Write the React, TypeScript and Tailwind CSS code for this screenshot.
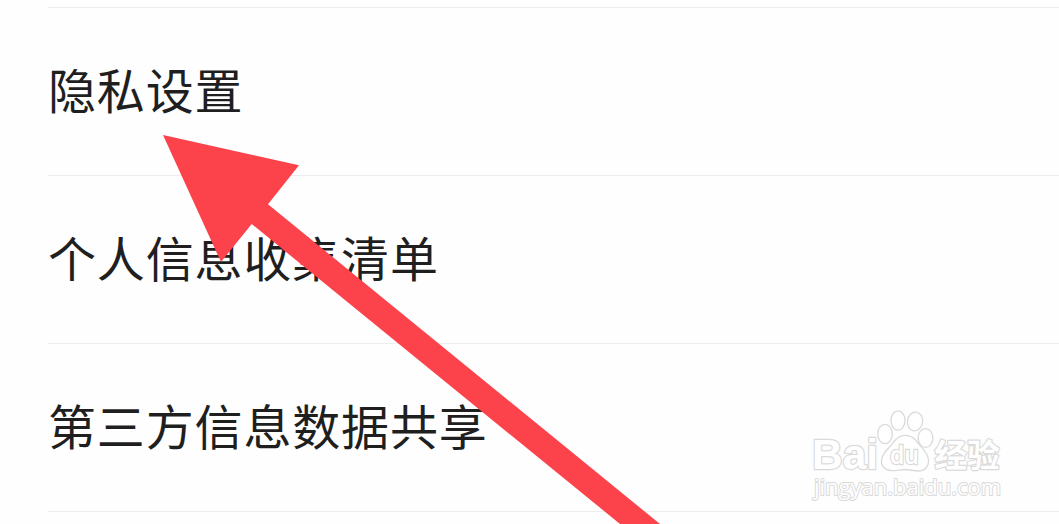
const rows = ["隐私设置", "个人信息收集清单", "第三方信息数据共享"];

function Arrow() {
  return (
    <svg className="pointer-events-none absolute inset-0" width="1059" height="524" viewBox="0 0 1059 524">
      <path d="M163 135 299 165.3 268 204.3 660 524H620L251.7 224 221 262Z" fill="#fc424a" />
    </svg>
  );
}

function Watermark() {
  return (
    <svg
      className="pointer-events-none absolute left-[800px] top-[400px]"
      width="220"
      height="110"
      viewBox="0 0 220 110"
      fill="#fff"
      stroke="#dadada"
      strokeWidth="1.3"
    >
      <g paintOrder="stroke" strokeWidth="2.4" strokeLinejoin="round">
        <text
          x="12"
          y="68.500"
          fontFamily="'Liberation Sans', Arial, sans-serif"
          fontSize="42"
          fontWeight="700"
          textLength="66"
          lengthAdjust="spacingAndGlyphs"
        >
          Bai
        </text>
        <text
          x="134.500"
          y="66.500"
          fontFamily="'Noto Sans CJK SC', sans-serif"
          fontSize="32"
          fontWeight="700"
          textLength="65"
          lengthAdjust="spacingAndGlyphs"
        >
          经验
        </text>
        <text
          x="14"
          y="94.500"
          fontFamily="'Open Sans', 'Noto Sans', sans-serif"
          fontSize="22"
          fontWeight="400"
          strokeWidth="2"
          textLength="187"
          lengthAdjust="spacingAndGlyphs"
        >
          jingyan.baidu.com
        </text>
      </g>
      <ellipse cx="85" cy="34" rx="7.3" ry="9.6" />
      <ellipse cx="98" cy="20.5" rx="7" ry="9.7" />
      <ellipse cx="115" cy="21.5" rx="7.6" ry="9.4" transform="rotate(8 115 21.5)" />
      <ellipse cx="125.500" cy="38" rx="7.4" ry="9.4" />
      <path d="M105 35.3c-6 0-9.500 3.500-12.500 8.200C89.500 48 82.500 52 81.500 60c-.7 6.500 4 10.700 10.500 10.700 4.500 0 8.500-1.200 13-1.200s8.500 1.500 13 1.500c6.500 0 11-4.500 10.500-11-.7-7.500-6.500-12-10.500-17-3.500-4.500-6.500-7.700-13-7.700z" />
      <text
        x="90"
        y="64"
        fontFamily="'Open Sans', 'Liberation Sans', sans-serif"
        fontSize="25"
        fontWeight="600"
        paintOrder="stroke"
        strokeWidth="2.4"
        textLength="29"
        lengthAdjust="spacingAndGlyphs"
      >
        du
      </text>
    </svg>
  );
}

export default function App() {
  return (
    <main className="relative h-[524px] w-[1059px] overflow-hidden bg-[#fefefe] pl-12 pt-[7px] font-['Noto_Sans_CJK_SC',sans-serif]">
      <ul className="border-t border-[#ededed]">
        {rows.map((label) => (
          <li
            key={label}
            className="flex h-[168px] items-center border-b border-[#ededed] pb-2 text-[48px] leading-none tracking-[0.85px] text-[#1f1f1f]"
          >
            <span className="whitespace-nowrap">{label}</span>
          </li>
        ))}
      </ul>
      <Arrow />
      <Watermark />
    </main>
  );
}
